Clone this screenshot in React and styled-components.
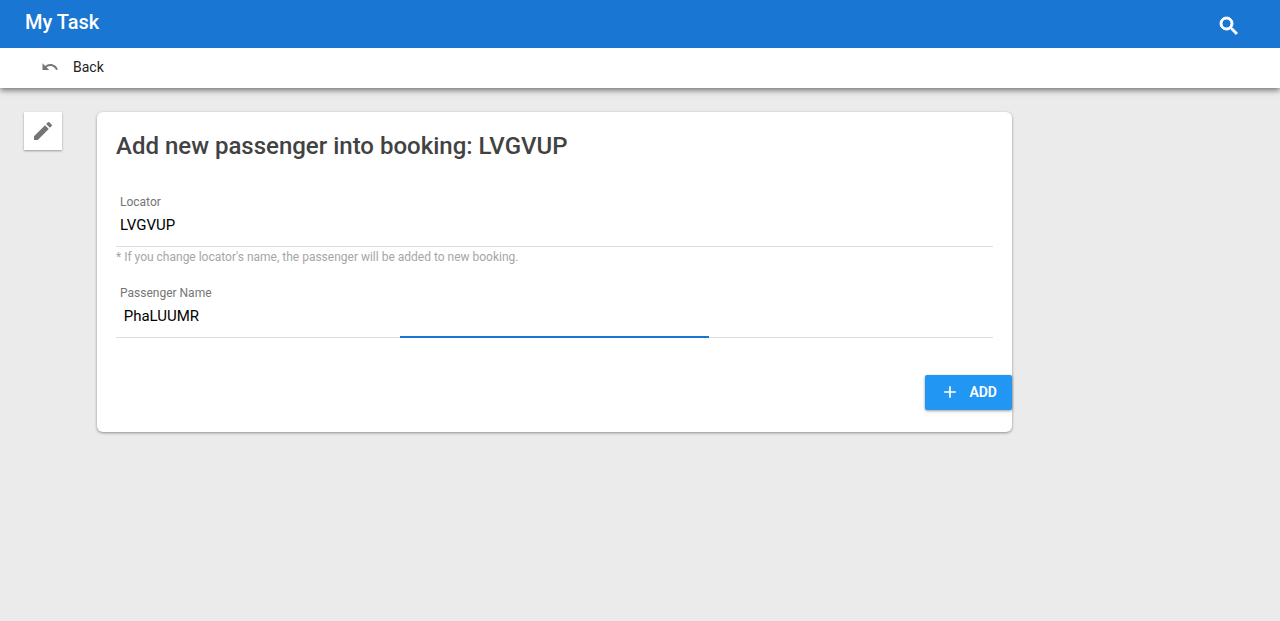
import React, { useState } from "react";
import styled, { createGlobalStyle } from "styled-components";
import { MdAdd, MdEdit, MdSearch, MdUndo } from "react-icons/md";

const GlobalStyle = createGlobalStyle`
  *, *::before, *::after { box-sizing: border-box; }
  body {
    margin: 0;
    background: #ebebeb;
    color: #212121;
    font-family: Roboto, "Liberation Sans", sans-serif;
  }
  button, input { font-family: inherit; }
`;

const Header = styled.header`
  position: relative;
  z-index: 1;
  background: #fff;
  box-shadow: 0 2px 6px rgba(0, 0, 0, 0.55);
`;

const TitleBar = styled.div`
  display: flex;
  justify-content: space-between;
  height: 48px;
  padding: 10px 39px 0 25px;
  background: #1976d2;
  color: #fff;
`;

const AppTitle = styled.h1`
  margin: 0;
  font-size: 20px;
  font-weight: 500;
  line-height: 24px;
`;

const SearchButton = styled.button`
  display: flex;
  align-items: center;
  height: 32px;
  padding: 0;
  border: 0;
  background: none;
  color: inherit;
  font-size: 24px;
  cursor: pointer;

  svg { stroke: none; }

  path:last-child {
    stroke: currentColor;
    stroke-width: 1px;
  }
`;

const NavBar = styled.nav`
  display: flex;
  align-items: center;
  height: 40px;
  padding: 0 41px 2px;
`;

const BackLink = styled.a`
  display: flex;
  align-items: center;
  gap: 14px;
  color: #212121;
  font-size: 14px;
  line-height: 20px;
  text-decoration: none;

  svg {
    color: #757575;
    font-size: 18px;
  }
`;

const Main = styled.main`
  display: flex;
  align-items: flex-start;
  gap: 35px;
  padding: 24px;
`;

const EditButton = styled.button`
  display: flex;
  flex: none;
  align-items: center;
  justify-content: center;
  width: 38px;
  height: 38px;
  padding: 0;
  border: 0;
  background: #fff;
  box-shadow: 0 1px 2px rgba(0, 0, 0, 0.35);
  color: #757575;
  font-size: 24px;
  cursor: pointer;
`;

const Card = styled.form`
  flex: 1;
  max-width: 915px;
  padding: 18px 0 22px;
  border-radius: 6px;
  background: #fff;
  box-shadow: 0 1px 3px rgba(0, 0, 0, 0.4);
`;

const CardTitle = styled.h2`
  margin: 0;
  padding: 0 19px;
  color: #424242;
  font-size: 24px;
  font-weight: 500;
  line-height: 32px;
`;

const Fields = styled.div`
  display: grid;
  gap: 20px;
  padding: 32px 19px 0;
`;

const FieldBox = styled.div`
  display: flex;
  flex-direction: column;
`;

const Label = styled.label`
  padding: 0 4px;
  color: #757575;
  font-size: 12px;
  line-height: 16px;
`;

const InputLine = styled.div`
  position: relative;
  border-bottom: 1px solid #dedede;

  &::after {
    content: "";
    display: ${(p) => (p.$active ? "block" : "none")};
    position: absolute;
    right: 284px;
    bottom: -1px;
    left: 284px;
    height: 2px;
    background: #1976d2;
  }
`;

const Input = styled.input`
  display: block;
  width: 100%;
  height: 36px;
  padding: 0 4px 6px;
  border: 0;
  outline: 0;
  background: none;
  color: #000;
  font-size: 15px;
`;

const Hint = styled.p`
  margin: 0;
  padding-top: 2px;
  color: #a6a6a6;
  font-size: 12px;
  line-height: 16px;
`;

const Actions = styled.div`
  display: flex;
  justify-content: flex-end;
  padding-top: 37px;
`;

const AddButton = styled.button`
  display: flex;
  align-items: center;
  gap: 9px;
  height: 35px;
  padding: 0 15px 1px;
  border: 0;
  border-radius: 2px;
  background: #2196f3;
  box-shadow: 0 1px 3px rgba(0, 0, 0, 0.4);
  color: #fff;
  font-size: 14px;
  font-weight: 600;
  cursor: pointer;

  svg { font-size: 20px; }
`;

function Field({ id, label, initial, hint, active }) {
  const [value, setValue] = useState(initial);
  return (
    <FieldBox>
      <Label htmlFor={id}>{label}</Label>
      <InputLine $active={active}>
        <Input id={id} type="text" value={value} onChange={(e) => setValue(e.target.value)} />
      </InputLine>
      {hint && <Hint>{hint}</Hint>}
    </FieldBox>
  );
}

export default function App() {
  return (
    <>
      <GlobalStyle />
      <Header>
        <TitleBar>
          <AppTitle>My Task</AppTitle>
          <SearchButton type="button" aria-label="Search"><MdSearch /></SearchButton>
        </TitleBar>
        <NavBar>
          <BackLink href="#back"><MdUndo />Back</BackLink>
        </NavBar>
      </Header>
      <Main>
        <EditButton type="button" aria-label="Edit"><MdEdit /></EditButton>
        <Card onSubmit={(e) => e.preventDefault()}>
          <CardTitle>Add new passenger into booking: LVGVUP</CardTitle>
          <Fields>
            <Field
              id="locator"
              label="Locator"
              initial="LVGVUP"
              hint="* If you change locator's name, the passenger will be added to new booking."
            />
            <Field id="passenger" label="Passenger Name" initial=" PhaLUUMR" active />
          </Fields>
          <Actions>
            <AddButton type="submit"><MdAdd />ADD</AddButton>
          </Actions>
        </Card>
      </Main>
    </>
  );
}
